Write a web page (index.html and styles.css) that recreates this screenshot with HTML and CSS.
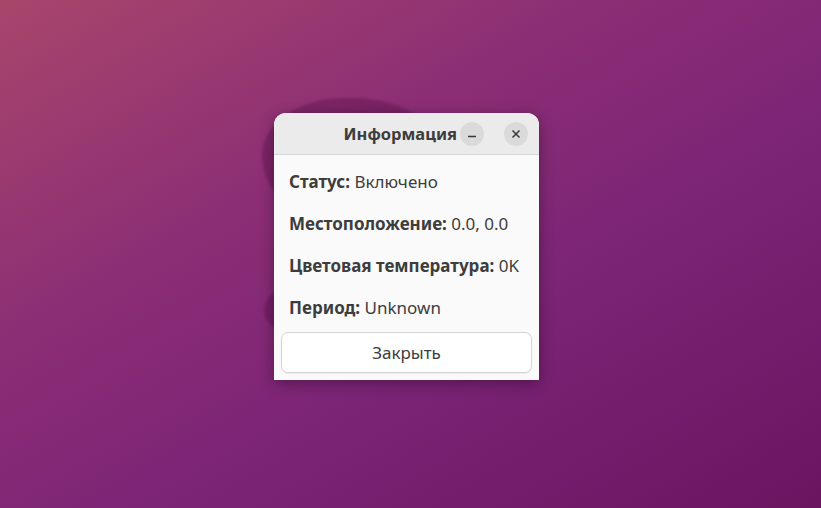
FILE: index.html
```html
<!DOCTYPE html>
<html lang="ru">
<head>
    <meta charset="UTF-8">
    <meta name="viewport" content="width=device-width, initial-scale=1.0">
    <title>Информация</title>
    <link rel="stylesheet" href="styles.css">
</head>
<body>

    <div class="desktop">
        <!-- пятна обоев за окном -->
        <div class="blob blob-main"></div>
        <div class="blob blob-small"></div>

        <div class="dialog">
            <div class="titlebar">
                <span class="title">Информация</span>
                <button class="win-btn" title="Свернуть">
                    <svg width="10" height="10" viewBox="0 0 10 10"><path d="M1 7.5h8" stroke="#3a3a3a" stroke-width="1.4"/></svg>
                </button>
                <button class="win-btn" title="Закрыть">
                    <svg width="10" height="10" viewBox="0 0 10 10"><path d="M1.5 1.5l7 7M8.5 1.5l-7 7" stroke="#3a3a3a" stroke-width="1.5"/></svg>
                </button>
            </div>

            <div class="content">
                <div class="row"><b>Статус:</b> Включено</div>
                <div class="row"><b>Местоположение:</b> 0.0, 0.0</div>
                <div class="row"><b>Цветовая температура:</b> 0K</div>
                <div class="row"><b>Период:</b> Unknown</div>
                <button class="close-btn">Закрыть</button>
            </div>
        </div>
    </div>

</body>
</html>
```

FILE: styles.css
```css
html, body {
    margin: 0;
    padding: 0;
    height: 100%;
}

body {
    font-family: 'Noto Sans', 'Open Sans', sans-serif;
    color: #3d3d3d;
    overflow: hidden;
}

.desktop {
    position: relative;
    height: 100%;
    display: flex;
    align-items: flex-start;
    justify-content: flex-start;
    padding: 113px 0 0 274px;
    box-sizing: border-box;
    background: linear-gradient(150deg, #a8466b 0%, #8c2e75 35%, #7c2476 60%, #6b1561 100%);
}

.blob {
    position: absolute;
    background: rgba(70, 5, 60, 0.28);
    border-radius: 50%;
    filter: blur(1px);
}

.blob-main {
    left: 262px;
    top: 98px;
    width: 190px;
    height: 135px;
    border-radius: 45% 55% 40% 60%;
}

.blob-small {
    left: 264px;
    top: 285px;
    width: 70px;
    height: 50px;
}

.dialog {
    position: relative;
    width: 265px;
    background-color: #fafafa;
    border-radius: 12px 12px 0 0;
    box-shadow: 0 3px 14px rgba(0, 0, 0, 0.35);
    overflow: hidden;
}

.titlebar {
    height: 41px;
    display: flex;
    align-items: center;
    justify-content: flex-end;
    gap: 20px;
    padding: 0 11px 0 0;
    background-color: #ebebeb;
    border-bottom: 1px solid #d6d6d6;
}

.title {
    font-weight: bold;
    font-size: 16.5px;
    margin-right: -17px;
}

.win-btn {
    width: 24px;
    height: 24px;
    border: none;
    border-radius: 50%;
    background-color: #dadada;
    display: flex;
    align-items: center;
    justify-content: center;
    padding: 0;
    cursor: pointer;
}

.content {
    padding: 6px 7px 7px;
}

.row {
    height: 42px;
    line-height: 42px;
    padding-left: 8px;
    font-size: 17px;
    white-space: nowrap;
}

.close-btn {
    display: block;
    width: 100%;
    height: 41px;
    margin-top: 3px;
    font-family: inherit;
    font-size: 17px;
    color: #3d3d3d;
    background-color: #ffffff;
    border: 1px solid #d4d4d4;
    border-radius: 7px;
    box-shadow: 0 1px 1px rgba(0, 0, 0, 0.06);
    cursor: pointer;
}

.close-btn:hover {
    background-color: #f2f2f2;
}
```
